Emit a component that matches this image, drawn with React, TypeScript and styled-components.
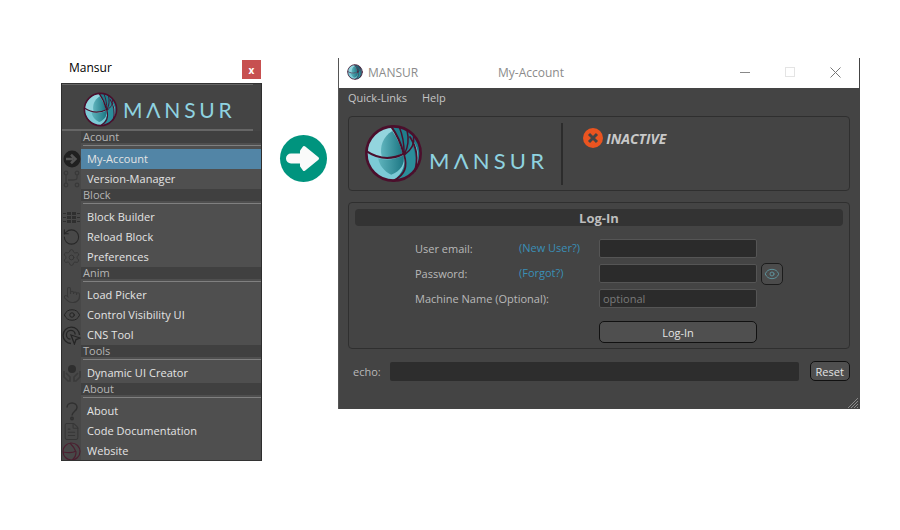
import styled, { createGlobalStyle } from 'styled-components';
import { Eye, FileText, Pointer, RotateCcw, Settings } from 'lucide-react';
import type { ReactNode } from 'react';

const GlobalStyle = createGlobalStyle`
  html, body {
    margin: 0;
    background: #fff;
  }
  * {
    box-sizing: border-box;
  }
`;

const Page = styled.div`
  display: flex;
  align-items: flex-start;
  width: 900px;
  height: 530px;
  padding: 58px 0 0 61px;
  overflow: hidden;
  font-family: 'Open Sans', 'Liberation Sans', sans-serif;
  font-size: 11px;
`;

const Dock = styled.div`
  width: 201px;
`;

const DockTitle = styled.div`
  display: flex;
  align-items: flex-start;
  justify-content: space-between;
  height: 25px;
  padding: 2px 1px 0 8px;
  font-size: 12px;
  line-height: 16px;
  color: #000;
`;

const CloseBox = styled.div`
  display: flex;
  align-items: center;
  justify-content: center;
  width: 19px;
  height: 19px;
  background: #c75050;
  color: #fff;
  font-size: 10px;
  font-weight: 700;
`;

const DockBody = styled.div`
  height: 378px;
  overflow: hidden;
  background: #484848;
  border: 1px solid #2e2e2e;
  border-top-color: #333;
  border-bottom-color: #333;
`;

const DockBrand = styled.div`
  height: 47px;
  background: #444;
`;

const DockBrandInner = styled.div`
  display: flex;
  align-items: center;
  gap: 5px;
  width: 191px;
  height: 47px;
  padding: 4px 0 0 21px;
  border-top: 1px solid #666;
  border-bottom: 2px solid #666;
`;

const SectionHead = styled.div`
  height: 18px;
  margin-left: 19px;
  background: linear-gradient(#404040 0 12px, #4f4f4f 12px);
  position: relative;
  color: #b5b5b5;
  line-height: 12px;
  padding-left: 2px;

  &::after {
    content: '';
    position: absolute;
    left: 2px;
    right: 0;
    top: 14px;
    height: 1px;
    background: #808080;
  }
`;

const Row = styled.div`
  display: flex;
  height: 20px;
`;

const RowIcon = styled.div`
  display: flex;
  align-items: center;
  justify-content: center;
  width: 19px;
  color: #2e2e2e;
`;

const RowLabel = styled.div<{ $active?: boolean }>`
  flex: 1;
  padding-left: 6px;
  line-height: 20px;
  letter-spacing: 0.05px;
  color: #e4e4e4;
  background: ${(p) => (p.$active ? '#5285a6' : '#4f4f4f')};
`;

const Pointing = styled.div`
  width: 47px;
  height: 47px;
  margin: 77px 11px 0 18px;
  border-radius: 50%;
  background: #00947e;
`;

const Win = styled.div`
  position: relative;
  width: 522px;
  height: 351px;
  border-left: 1px solid #555;
  border-right: 1px solid #444;
`;

const TitleBar = styled.div`
  display: flex;
  align-items: center;
  height: 30px;
  padding: 0 0 2px 8px;
  background: #fff;
  color: #8b8b8b;
  font-size: 12px;
`;

const AppName = styled.span`
  margin-left: 5px;
  width: 130px;
`;

const WinControls = styled.div`
  display: flex;
  align-items: center;
  gap: 35px;
  margin-left: auto;
  padding-right: 18px;
`;

const WinBody = styled.div`
  height: 321px;
  padding: 0 9px;
  background: #444;
  color: #b9b9b9;
`;

const MenuBar = styled.div`
  display: flex;
  gap: 15px;
  height: 22px;
  line-height: 20px;
  color: #c4c4c4;
`;

const BrandBox = styled.div`
  display: flex;
  align-items: center;
  height: 75px;
  margin-top: 6px;
  padding-left: 15px;
  border: 1px solid #2f2f2f;
  border-radius: 4px;
`;

const BrandWord = styled.div`
  display: flex;
  margin: 14px 0 0 6px;
`;

const Divider = styled.div`
  width: 2px;
  height: 62px;
  margin-left: 13px;
  background: #2c2c2c;
`;

const Status = styled.div`
  display: flex;
  align-items: center;
  gap: 3px;
  align-self: flex-start;
  margin: 11px 0 0 20px;
  font-size: 14px;
  font-weight: 700;
  font-style: italic;
  color: #c9c9c9;
`;

const LoginBox = styled.div`
  height: 147px;
  margin-top: 11px;
  padding: 6px;
  border: 1px solid #2f2f2f;
  border-radius: 4px;
`;

const LoginHead = styled.div`
  height: 17px;
  border-radius: 4px;
  background: #333;
  text-align: center;
  font-size: 13px;
  font-weight: 700;
  line-height: 18px;
  color: #bdbdbd;
`;

const LoginGrid = styled.div`
  display: grid;
  grid-template-columns: 104px 80px 158px 22px;
  grid-auto-rows: 19px;
  row-gap: 6px;
  align-items: center;
  margin: 13px 0 0 60px;
`;

const FieldLabel = styled.div<{ $wide?: boolean }>`
  grid-column: ${(p) => (p.$wide ? 'span 2' : 'auto')};
  color: #b9b9b9;
`;

const HelpLink = styled.div`
  color: #3a8fb7;
  margin-top: -2px;
`;

const Field = styled.input`
  width: 158px;
  height: 19px;
  padding: 0 3px;
  border: 1px solid #555;
  border-radius: 2px;
  background: #2b2b2b;
  color: #ccc;
  font: inherit;
  outline: none;

  &::placeholder {
    color: #7a7a7a;
    opacity: 1;
  }
`;

const EyeButton = styled.div`
  display: flex;
  align-items: center;
  justify-content: center;
  width: 22px;
  height: 22px;
  margin-left: 4px;
  border: 1px solid #1c1c1c;
  border-radius: 5px;
  background: #4b4b4b;
  color: #5f959e;
`;

const Button = styled.div`
  display: flex;
  align-items: center;
  justify-content: center;
  border: 1px solid #111;
  border-radius: 5px;
  background: #4f4f4f;
  color: #e4e4e4;
`;

const SubmitButton = styled(Button)`
  grid-column: 3;
  align-self: start;
  height: 22px;
  margin-top: 7px;
`;

const EchoRow = styled.div`
  display: flex;
  align-items: center;
  height: 20px;
  margin-top: 12px;
  padding-left: 5px;
`;

const EchoField = styled.div`
  width: 409px;
  height: 19px;
  margin: 0 11px 0 9px;
  border-radius: 2px;
  background: #2d2d2d;
`;

const ResetButton = styled(Button)`
  width: 40px;
  height: 20px;
`;

const Grip = styled.svg`
  position: absolute;
  right: 0;
  bottom: 0;
`;

const Word = styled.span<{ $size: number; $track: number }>`
  font-family: Lato, 'Open Sans', sans-serif;
  font-weight: 400;
  font-size: ${(p) => p.$size}px;
  letter-spacing: ${(p) => p.$track}px;
  line-height: 1;
  color: #8fd3e0;
`;

function LogoMark({ size }: { size: number }) {
  return (
    <svg width={size} height={size} viewBox="0 0 100 100" style={{ flex: 'none' }}>
      <defs>
        <linearGradient id="shell" x1="0" x2="1" y1="0" y2="0">
          <stop offset="0" stopColor="#5fb4bd" />
          <stop offset="1" stopColor="#1c7683" />
        </linearGradient>
      </defs>
      <circle cx="50" cy="50" r="46" fill="#1f7e8c" />
      <path d="M4 46C8 22 25 6 46 4C56 18 63 34 66 50C45 62 22 58 4 46Z" fill="#93d5de" />
      <path d="M48 12C32 22 26 38 30 55C44 59 56 56 65 49C62 36 56 24 48 12Z" fill="url(#shell)" />
      <path d="M4 46C22 58 45 62 68 50C72 66 66 84 50 96C24 96 4 72 4 46Z" fill="#7ccad6" />
      <path d="M24 58C38 62 54 60 67 53C70 68 62 80 46 86C34 80 26 70 24 58Z" fill="url(#shell)" />
      <path d="M68 52C74 72 68 86 50 96C70 96 82 88 86 80C90 60 84 40 78 22C80 36 76 46 68 52Z" fill="#2b8d9a" />
      <path d="M78 22C90 40 92 60 86 80C94 66 96 40 78 22Z" fill="#8fd3dc" />
      <g fill="none" stroke="#4b0f2c" strokeLinecap="round">
        <circle cx="50" cy="50" r="46" strokeWidth="4.5" />
        <path d="M4 46C22 58 45 62 68 50" strokeWidth="3.5" />
        <path d="M46 4C56 18 63 34 67 50" strokeWidth="3.5" />
        <path d="M60 6C66 20 68 34 68 50M73 11C76 24 75 38 69 50M84 22C86 34 80 44 69 52" strokeWidth="2.5" />
        <path d="M68 52C74 72 70 86 50 96" strokeWidth="3" />
        <path d="M78 22C90 40 92 60 86 80" strokeWidth="3" />
      </g>
    </svg>
  );
}

function ArrowCircleIcon() {
  return (
    <svg width="18" height="18" viewBox="0 0 18 18">
      <circle cx="9" cy="9" r="8.5" fill="#202020" />
      <path d="M3 9h7M8 4.8 12.4 9 8 13.2" fill="none" stroke="#555" strokeWidth="2.6" />
    </svg>
  );
}

function BranchIcon() {
  return (
    <svg width="17" height="18" viewBox="0 0 17 18" fill="none" stroke="#3a3a3a" strokeWidth="1.3">
      <circle cx="3" cy="3" r="1.8" />
      <circle cx="14" cy="3" r="1.8" />
      <circle cx="3" cy="15" r="1.8" />
      <circle cx="14" cy="15" r="1.8" />
      <path d="M3 5v8M14 5v3c0 2-2 2-5 2H5" />
    </svg>
  );
}

function GridIcon() {
  return (
    <svg width="17" height="11" viewBox="0 0 17 11" fill="#2f2f2f">
      <rect x="4" y="0" width="4" height="3" />
      <rect x="9" y="0" width="4" height="3" />
      <rect x="4" y="4" width="4" height="3" />
      <rect x="9" y="4" width="4" height="3" />
      <rect x="4" y="8" width="4" height="3" />
      <rect x="9" y="8" width="4" height="3" />
      <rect x="0" y="1" width="3" height="1" />
      <rect x="0" y="5" width="3" height="1" />
      <rect x="0" y="9" width="3" height="1" />
      <rect x="14" y="1" width="3" height="1" />
      <rect x="14" y="5" width="3" height="1" />
      <rect x="14" y="9" width="3" height="1" />
    </svg>
  );
}

function TargetClickIcon() {
  return (
    <svg width="19" height="19" viewBox="0 0 19 19" fill="none" stroke="#252525" strokeWidth="1.3">
      <path d="M9 17.5A8.2 8.2 0 1 1 17.5 9" />
      <path d="M8.5 13.2A4.4 4.4 0 1 1 13.2 8.5" />
      <path d="M9 9l9 3-4 1.6L12.4 18z" fill="#484848" />
    </svg>
  );
}

function CareIcon() {
  return (
    <svg width="18" height="18" viewBox="0 0 18 18">
      <circle cx="9" cy="5" r="4" fill="#2e2e2e" />
      <path d="M1 7v6l4 4h2v-4L3 9M17 7v6l-4 4h-2v-4l4-4" fill="none" stroke="#3a3a3a" strokeWidth="1.6" />
    </svg>
  );
}

function QuestionIcon() {
  return (
    <svg width="14" height="19" viewBox="0 0 14 19" fill="none" stroke="#303030" strokeWidth="1.5">
      <path d="M2 5.5C2 3 4 1 7 1s5 2 5 4.5c0 3.5-5 4-5 8" />
      <circle cx="7" cy="16.5" r="1.2" />
    </svg>
  );
}

function SiteIcon() {
  return (
    <svg width="19" height="19" viewBox="0 0 19 19" fill="none" stroke="#4b2030" strokeWidth="1.2">
      <circle cx="9.5" cy="9.5" r="8.5" />
      <path d="M1 10c5 1 10 1 13-1M8 1c3 3 5 6 6 9 0 3-1 6-4 8" />
    </svg>
  );
}

function ErrorIcon() {
  return (
    <svg width="20" height="20" viewBox="0 0 20 20" style={{ flex: 'none' }}>
      <circle cx="10" cy="10" r="10" fill="#ea5420" />
      <path d="M6 6l8 8M14 6l-8 8" stroke="#444" strokeWidth="3" />
    </svg>
  );
}

function BigArrow() {
  return (
    <svg width="47" height="47" viewBox="0 0 47 47" style={{ display: 'block' }}>
      <path d="M11 23.5H24" stroke="#fafafa" strokeWidth="10" strokeLinecap="round" />
      <path
        d="M24 12.5 37.5 23.5 24 34.5 21.5 31V16Z"
        fill="#fafafa"
        stroke="#fafafa"
        strokeWidth="3"
        strokeLinejoin="round"
      />
    </svg>
  );
}

interface DockItem {
  label: string;
  icon: ReactNode;
  active?: boolean;
}

interface DockSection {
  title: string;
  items: DockItem[];
}

const sections: DockSection[] = [
  {
    title: 'Acount',
    items: [
      { label: 'My-Account', icon: <ArrowCircleIcon />, active: true },
      { label: 'Version-Manager', icon: <BranchIcon /> },
    ],
  },
  {
    title: 'Block',
    items: [
      { label: 'Block Builder', icon: <GridIcon /> },
      { label: 'Reload Block', icon: <RotateCcw size={20} strokeWidth={1.3} color="#262626" /> },
      { label: 'Preferences', icon: <Settings size={19} strokeWidth={1.2} color="#363636" /> },
    ],
  },
  {
    title: 'Anim',
    items: [
      { label: 'Load Picker', icon: <Pointer size={18} strokeWidth={1.4} color="#383838" /> },
      { label: 'Control Visibility UI', icon: <Eye size={18} strokeWidth={1.3} color="#222" /> },
      { label: 'CNS Tool', icon: <TargetClickIcon /> },
    ],
  },
  {
    title: 'Tools',
    items: [{ label: 'Dynamic UI Creator', icon: <CareIcon /> }],
  },
  {
    title: 'About',
    items: [
      { label: 'About', icon: <QuestionIcon /> },
      { label: 'Code Documentation', icon: <FileText size={19} strokeWidth={1.3} color="#363636" /> },
      { label: 'Website', icon: <SiteIcon /> },
    ],
  },
];

export default function App() {
  return (
    <Page>
      <GlobalStyle />
      <Dock>
        <DockTitle>
          Mansur
          <CloseBox>x</CloseBox>
        </DockTitle>
        <DockBody>
          <DockBrand>
            <DockBrandInner>
              <LogoMark size={35} />
              <Word $size={21} $track={3.8}>MΛNSUR</Word>
            </DockBrandInner>
          </DockBrand>
          {sections.map((section) => (
            <div key={section.title}>
              <SectionHead>{section.title}</SectionHead>
              {section.items.map((item) => (
                <Row key={item.label}>
                  <RowIcon>{item.icon}</RowIcon>
                  <RowLabel $active={item.active}>{item.label}</RowLabel>
                </Row>
              ))}
            </div>
          ))}
        </DockBody>
      </Dock>

      <Pointing>
        <BigArrow />
      </Pointing>

      <Win>
        <TitleBar>
          <LogoMark size={16} />
          <AppName>MANSUR</AppName>
          <span>My-Account</span>
          <WinControls>
            <svg width="10" height="10" viewBox="0 0 10 10">
              <path d="M0 5.5h10" stroke="#888" />
            </svg>
            <svg width="10" height="10" viewBox="0 0 10 10">
              <rect x="0.5" y="0.5" width="9" height="9" fill="none" stroke="#e4e4e4" />
            </svg>
            <svg width="11" height="11" viewBox="0 0 11 11">
              <path d="M0.5 0.5l10 10M10.5 0.5l-10 10" stroke="#777" />
            </svg>
          </WinControls>
        </TitleBar>
        <WinBody>
          <MenuBar>
            <span>Quick-Links</span>
            <span>Help</span>
          </MenuBar>
          <BrandBox>
            <LogoMark size={59} />
            <BrandWord>
              <Word $size={22} $track={4.2}>MΛNSUR</Word>
            </BrandWord>
            <Divider />
            <Status>
              <ErrorIcon />
              INACTIVE
            </Status>
          </BrandBox>
          <LoginBox>
            <LoginHead>Log-In</LoginHead>
            <LoginGrid>
              <FieldLabel>User email:</FieldLabel>
              <HelpLink>(New User?)</HelpLink>
              <Field />
              <span />
              <FieldLabel>Password:</FieldLabel>
              <HelpLink>(Forgot?)</HelpLink>
              <Field />
              <EyeButton>
                <Eye size={16} strokeWidth={1.4} />
              </EyeButton>
              <FieldLabel $wide>Machine Name (Optional):</FieldLabel>
              <Field placeholder="optional" />
              <span />
              <SubmitButton>Log-In</SubmitButton>
            </LoginGrid>
          </LoginBox>
          <EchoRow>
            <span>echo:</span>
            <EchoField />
            <ResetButton>Reset</ResetButton>
          </EchoRow>
        </WinBody>
        <Grip width="12" height="12" viewBox="0 0 12 12">
          <path d="M11 1 1 11M11 4 4 11M11 7 7 11M11 10 10 11" stroke="#8a8a8a" />
        </Grip>
      </Win>
    </Page>
  );
}
